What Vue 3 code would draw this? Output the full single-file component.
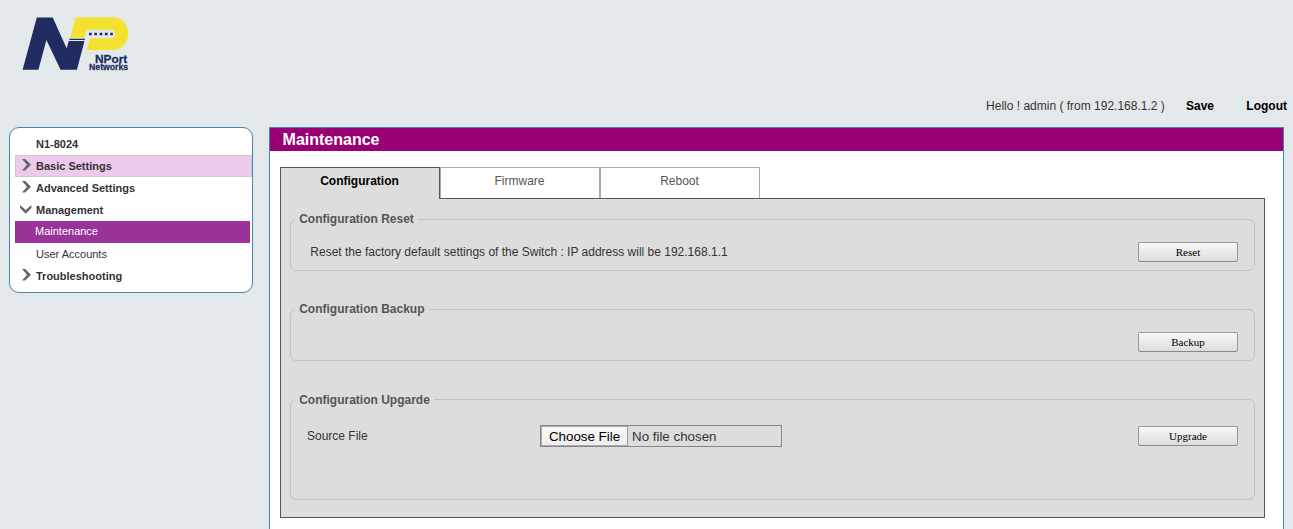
<script setup>
const menu = [
  { label: 'N1-8024', kind: 'title' },
  { label: 'Basic Settings', kind: 'branch', icon: 'right', hover: true },
  { label: 'Advanced Settings', kind: 'branch', icon: 'right' },
  { label: 'Management', kind: 'branch', icon: 'down' },
  { label: 'Maintenance', kind: 'page', active: true },
  { label: 'User Accounts', kind: 'page' },
  { label: 'Troubleshooting', kind: 'branch', icon: 'right' },
]
const tabs = ['Configuration', 'Firmware', 'Reboot']
</script>

<template>
  <div class="screen">
    <header class="top">
      <svg class="logo" viewBox="10 5 140 80" width="140" height="80">
        <path fill="#202b60" d="M22.6 69.8 36.8 17.4h15.9l14 31.2 2-7.5h15.8l-7.6 28.7H60.6L46.4 39.9 38.4 69.8z" />
        <path fill="#f4e230" d="M75.7 17.3H113c9 0 15.2 7 15.2 16.2S122 50 113 50H86.6l3.3-11.7h21c5.5 0 5.5-8.6 0-8.6H88.3c-1.1 0-1.8.5-2.1 1.5l-1.8 6.6H70z" />
        <path fill="#202b60" d="M69.5 38.8h15.6l-.4 1.3H69.1z" />
        <path stroke="#202b60" stroke-width="2.5" stroke-dasharray="2.7 2.6" d="M89 34.1h23.8" />
        <g stroke="#202b60" stroke-width=".25" font-weight="bold">
          <text transform="translate(95 62.5) scale(.96 1)" font-size="11.5" textLength="33.6" lengthAdjust="spacingAndGlyphs">NPort</text>
          <text transform="translate(89.1 69.7) scale(1 1.1)" font-size="7.8" textLength="39" lengthAdjust="spacingAndGlyphs">Networks</text>
        </g>
      </svg>
      <div class="session">
        <span class="hello">Hello ! admin ( from 192.168.1.2 )</span>
        <b class="save">Save</b>
        <b>Logout</b>
      </div>
    </header>

    <div class="body">
      <nav class="menu">
        <div v-for="m in menu" :key="m.label" class="item" :class="[m.kind, { hover: m.hover, active: m.active }]">
          <svg v-if="m.icon === 'right'" class="right" width="10" height="12" viewBox="0 0 10 12"><path d="M0 0h3.2L9 5.7 3.2 11.4H0L5 5.7z" /></svg>
          <svg v-if="m.icon === 'down'" class="down" width="12" height="9" viewBox="0 0 12 9"><path d="M0 0v3l5.7 5.7L11.4 3V0L5.7 5z" /></svg>
          <span>{{ m.label }}</span>
        </div>
      </nav>

      <main class="content">
        <h1>Maintenance</h1>
        <div class="tabs">
          <div v-for="(t, i) in tabs" :key="t" class="tab" :class="{ current: i === 0 }">{{ t }}</div>
        </div>
        <section class="panel">
          <div class="group">
            <div class="legend">Configuration Reset</div>
            <span class="note">Reset the factory default settings of the Switch : IP address will be 192.168.1.1</span>
            <button>Reset</button>
          </div>
          <div class="group">
            <div class="legend">Configuration Backup</div>
            <button>Backup</button>
          </div>
          <div class="group upgrade">
            <div class="legend">Configuration Upgarde</div>
            <span class="source">Source File</span>
            <div class="file"><span class="choose">Choose File</span><span class="chosen">No file chosen</span></div>
            <button>Upgrade</button>
          </div>
        </section>
      </main>
    </div>
  </div>
</template>

<style>
body { background: #e3e9eb; overflow: hidden; }
</style>

<style scoped>
* { box-sizing: border-box; }
.screen { width: 1293px; height: 529px; overflow: hidden; font: 12px/14px "Liberation Sans", Arial, sans-serif; color: #333; background: #e3e9eb; }
.top { height: 127px; padding: 5px 6px 0 10px; display: flex; justify-content: space-between; }
.logo { display: block; fill: #202b60; }
.session { display: flex; padding-top: 94px; white-space: nowrap; }
.session b { color: #000; }
.hello { margin-right: 21.2px; }
.save { margin-right: 32.3px; }
.body { display: flex; align-items: flex-start; padding-left: 9px; }
.menu { width: 244px; height: 166px; border: 1px solid #4682b4; border-radius: 10px; background: #fff; padding: 5px 0 0 5px; margin-right: 16px; font-size: 11px; }
.item { height: 22px; display: flex; padding-left: 21px; line-height: 22px; font-weight: bold; position: relative; }
.item svg { position: absolute; fill: #666; }
.item .right { left: 7px; top: 4px; }
.item .down { left: 5px; top: 5.5px; }
.item.hover { background: #edcaeb; border: 1px solid #ccc; padding-left: 20px; line-height: 21px; }
.item.hover .right { left: 6px; top: 3px; }
.item.page { font-weight: normal; }
.item.active { background: #993299; color: #fff; width: 235px; padding-left: 20px; line-height: 21px; }
.content { width: 1015px; height: 420px; border: 1px solid #4682b4; background: #fff; }
h1 { margin: 0; height: 23px; padding-left: 12.6px; background: #990073; color: #fff; font: bold 16px/23px "Liberation Sans", Arial, sans-serif; }
.tabs { display: flex; margin: 16px 0 0 10px; position: relative; }
.tab { width: 160px; height: 31px; border: 1px solid #a9a9a9; border-bottom: 0; text-align: center; line-height: 27px; color: #555; padding-right: 1px; }
.current { height: 32px; margin-bottom: -1px; background: #ddd; border-color: #555; color: #000; font-weight: bold; }
.panel { margin-left: 10px; width: 985px; height: 320px; border: 1px solid #555; background: #ddd; padding: 20px 9px 0; }
.group { position: relative; height: 52px; border: 1px solid #b9c7c8; border-radius: 6px; margin-bottom: 38px; display: flex; align-items: flex-start; padding: 22px 16px 0; }
.legend { position: absolute; left: 4.2px; top: -8px; padding: 0 4px; background: #ddd; color: #555; font-weight: bold; }
.note { margin: 3px 0 0 3.3px; }
button { margin-left: auto; width: 100px; height: 20px; padding: 0; border: 1px solid #999; border-bottom-color: #888; border-radius: 2px; background: linear-gradient(#f8f8f8, #ddd); font: 11px/18px "Liberation Serif", "Times New Roman", serif; color: #000; }
.upgrade { height: 101px; padding-top: 26px; }
.upgrade .legend { top: -7px; }
.source { width: 233px; margin-top: 3px; }
.file { width: 242px; height: 22px; border: 1px solid #858585; display: flex; font-size: 13.333px; line-height: 20px; margin-top: -1px; }
.choose { width: 87px; height: 20px; border: 1px solid #aaa; border-right-color: #999; background: linear-gradient(#f8f8f8, #eee); color: #000; text-align: center; line-height: 19px; }
.chosen { margin-left: 4px; line-height: 21px; }
</style>
